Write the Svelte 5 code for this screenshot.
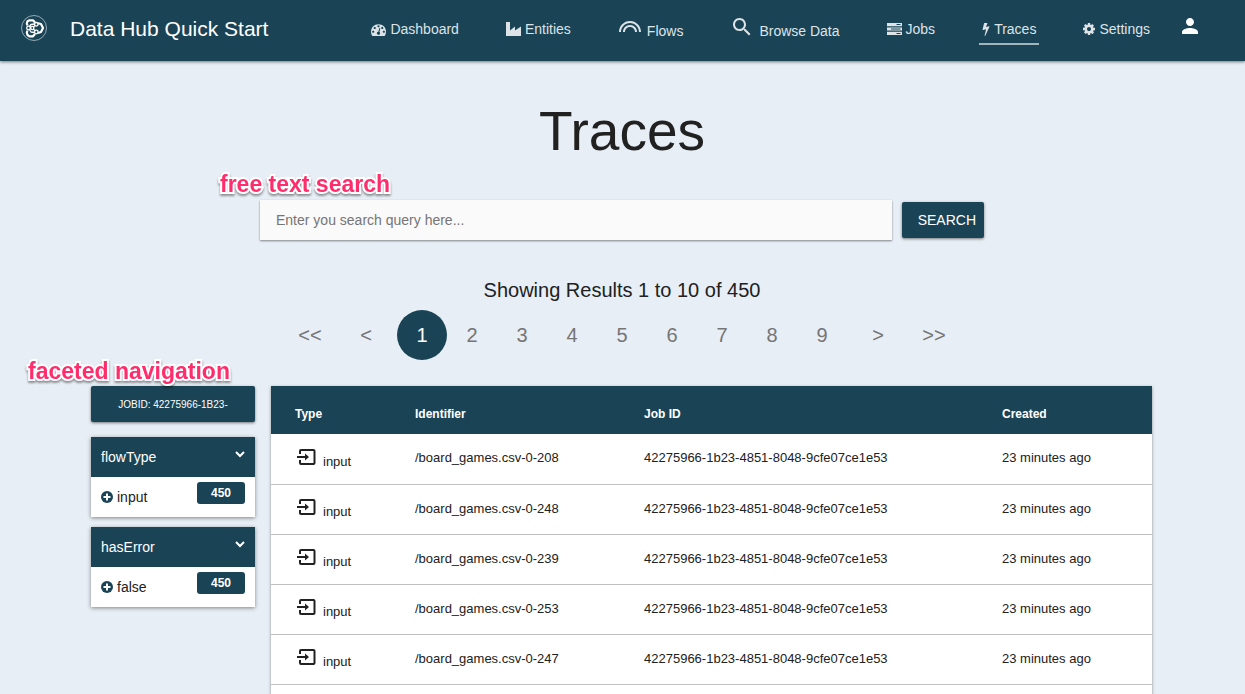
<script>
  const gauge = 'M384 1152q0-53-37.5-90.5t-90.5-37.5-90.5 37.5-37.5 90.5 37.5 90.5 90.5 37.5 90.5-37.5 37.5-90.5zm192-448q0-53-37.5-90.5t-90.5-37.5-90.5 37.5-37.5 90.5 37.5 90.5 90.5 37.5 90.5-37.5 37.5-90.5zm428 481l101-382q6-26-7.5-48.5t-38.5-29.5-48 6.5-30 39.5l-101 382q-60 5-107 43.5t-63 98.5q-20 77 20 146t117 89 146-20 89-117q16-60-6-117t-72-91zm660-33q0-53-37.5-90.5t-90.5-37.5-90.5 37.5-37.5 90.5 37.5 90.5 90.5 37.5 90.5-37.5 37.5-90.5zm-640-640q0-53-37.5-90.5t-90.5-37.5-90.5 37.5-37.5 90.5 37.5 90.5 90.5 37.5 90.5-37.5 37.5-90.5zm448 192q0-53-37.5-90.5t-90.5-37.5-90.5 37.5-37.5 90.5 37.5 90.5 90.5 37.5 90.5-37.5 37.5-90.5zm320 448q0 261-141 483-19 29-54 29h-1402q-35 0-54-29-141-221-141-483 0-182 71-348t191-286 286-191 348-71 348 71 286 191 191 286 71 348z';
  const cog = 'M1152 896q0-106-75-181t-181-75-181 75-75 181 75 181 181 75 181-75 75-181zm512-109v222q0 12-8 23t-20 13l-185 28q-19 54-39 91 35 50 107 138 10 12 10 25t-9 23q-27 37-99 108t-94 71q-12 0-26-9l-138-108q-44 23-91 38-16 136-29 186-7 28-36 28h-222q-14 0-24.5-8.5t-11.5-21.5l-28-184q-49-16-90-37l-141 107q-10 9-25 9-14 0-25-11-126-114-165-168-7-10-7-23 0-12 8-23 15-21 51-66.5t54-70.5q-27-50-41-99l-183-27q-13-2-21-12.5t-8-23.5v-222q0-12 8-23t19-13l186-28q14-46 39-92-40-57-107-138-10-12-10-24 0-10 9-23 26-36 98.5-107.5t94.5-71.5q13 0 26 10l138 107q44-23 91-38 16-136 29-186 7-28 36-28h222q14 0 24.5 8.5t11.5 21.5l28 184q49 16 90 37l142-107q9-9 24-9 13 0 25 10 129 119 165 170 7 8 7 22 0 12-8 23-15 21-51 66.5t-54 70.5q26 50 41 98l183 28q13 2 21 12.5t8 23.5z';
  const bolt = 'M1333 566q18 20 7 44l-540 1157q-13 25-42 25-4 0-14-2-17-5-25.5-19t-4.5-30l197-808-406 101q-4 1-12 1-18 0-31-11-18-15-13-39l201-825q4-14 16-23t28-9h328q19 0 32 12.5t13 29.5q0 8-5 18l-171 463 396-98q8-2 12-2 19 0 34 15z';
  const factory = 'M0 0h4v8.500l5-4v4l6-4v9.500h-15z';
  const servers = 'M0 0h15v3.200h-15zM9.500 1.100v1h4v-1zM0 4.400h15v3.200h-15zM4 5.500v1h9.500v-1zM0 8.800h15v3.200h-15zM9.500 9.900v1h4v-1z';
  const arcs = 'M12 10c-3.860 0-7 3.140-7 7h2c0-2.760 2.240-5 5-5s5 2.240 5 5h2c0-3.860-3.140-7-7-7zm0-4C5.930 6 1 10.930 1 17h2c0-4.960 4.040-9 9-9s9 4.040 9 9h2c0-6.070-4.930-11-11-11z';
  const magnifier = 'M15.500 14h-.790l-.280-.270C15.410 12.590 16 11.110 16 9.500 16 5.910 13.090 3 9.500 3S3 5.910 3 9.500 5.910 16 9.500 16c1.610 0 3.090-.590 4.230-1.570l.270.280v.790l5 4.990L20.490 19l-4.990-5zm-6 0C7.010 14 5 11.990 5 9.500S7.010 5 9.500 5 14 7.010 14 9.500 11.990 14 9.500 14z';

  const links = [
    { label: 'Dashboard', path: gauge, box: '0 128 1792 1536', w: 15, h: 13 },
    { label: 'Entities', path: factory, box: '0 0 15 14', w: 15, h: 14 },
    { label: 'Flows', path: arcs, box: '0 0 24 24', w: 24, h: 24, large: true },
    { label: 'Browse Data', path: magnifier, box: '0 0 24 24', w: 24, h: 24, large: true },
    { label: 'Jobs', path: servers, box: '0 0 15 12', w: 15, h: 12 },
    { label: 'Traces', path: bolt, box: '448 0 896 1792', w: 8, h: 14, active: true },
    { label: 'Settings', path: cog, box: '128 128 1536 1536', w: 12, h: 12 }
  ];

  const pages = [1, 2, 3, 4, 5, 6, 7, 8, 9];
  const facets = [
    { name: 'flowType', value: 'input', count: 450 },
    { name: 'hasError', value: 'false', count: 450 }
  ];
  const traces = [208, 248, 239, 253, 247].map((n) => ({
    type: 'input',
    identifier: `/board_games.csv-0-${n}`,
    job: '42275966-1b23-4851-8048-9cfe07ce1e53',
    created: '23 minutes ago'
  }));

  let query = $state('');
  let page = $state(1);
</script>

<div class="app">
  <header>
    <svg class="logo" viewBox="0 0 26 26" width="26" height="26" aria-hidden="true">
      <circle cx="13" cy="13" r="12.500" fill="none" stroke="#b4c2ca" stroke-width="0.800" />
      <g fill="none" stroke="#fff" stroke-linejoin="round">
        <path stroke-width="2.200" d="M6.500 10.500L5.800 8.500L6.500 6.200L8.500 5.300H12L14 7.500M17 8.300L20 9L22 13L20 17L17 18M14 19L12 21.300H8.500L6.500 20L5.800 17.500L6.500 15.500" />
        <g stroke-width="1.300">
          <circle cx="7.500" cy="13" r="1.800" />
          <circle cx="15.300" cy="9.300" r="1.800" />
          <circle cx="15.300" cy="17" r="1.800" />
          <circle cx="11.300" cy="13" r="1.600" />
          <path d="M12.500 12L14 10.500M12.500 14L14 15.800M8.500 11.500L10 9.500L13.500 9M8.500 14.500L10 17L13.500 17.500" />
        </g>
      </g>
    </svg>
    <span class="brand">Data Hub Quick Start</span>
    <nav aria-label="Main">
      {#each links as link}
        <a href="#{link.label}" class:active={link.active} class:large={link.large}>
          <svg viewBox={link.box} width={link.w} height={link.h} aria-hidden="true"><path d={link.path} fill="currentColor" fill-rule="evenodd" /></svg>
          <span>{link.label}</span>
        </a>
      {/each}
    </nav>
    <button class="user" aria-label="Account">
      <svg viewBox="0 0 24 24" width="24" height="24" aria-hidden="true"><path fill="#fff" d="M12 12c2.210 0 4-1.790 4-4s-1.790-4-4-4-4 1.790-4 4 1.790 4 4 4zm0 2c-2.670 0-8 1.340-8 4v2h16v-2c0-2.660-5.330-4-8-4z" /></svg>
    </button>
  </header>

  <main>
    <h1>Traces</h1>

    <form class="search" onsubmit={(e) => e.preventDefault()}>
      <span class="callout search-note">free text search</span>
      <input type="text" aria-label="Search query" placeholder="Enter you search query here..." bind:value={query} />
      <button class="go">SEARCH</button>
    </form>

    <p class="summary">Showing Results 1 to 10 of 450</p>
    <div class="pager">
      <button class="step">&lt;&lt;</button>
      <button class="step">&lt;</button>
      <div class="numbers">
        {#each pages as n}
          <button class:current={n === page} onclick={() => (page = n)}>{n}</button>
        {/each}
      </div>
      <button class="step">&gt;</button>
      <button class="step">&gt;&gt;</button>
    </div>

    <div class="content">
      <aside>
        <span class="callout facet-note">faceted navigation</span>
        <button class="chip">JOBID: 42275966-1B23-</button>
        {#each facets as facet}
          <section>
            <h2>
              {facet.name}
              <svg viewBox="0 0 10 7" width="10" height="7" aria-hidden="true"><path d="M1 1L5 5L9 1" fill="none" stroke="#fff" stroke-width="2" /></svg>
            </h2>
            <div class="facet">
              <svg viewBox="0 0 12 12" width="12" height="12" aria-hidden="true"><circle cx="6" cy="6" r="6" fill="#1a4456" /><path d="M6 2.500V9.500M2.500 6H9.500" stroke="#fff" stroke-width="2" /></svg>
              <span>{facet.value}</span>
              <b>{facet.count}</b>
            </div>
          </section>
        {/each}
      </aside>

      <table>
        <thead>
          <tr><th class="type">Type</th><th class="ident">Identifier</th><th class="job">Job ID</th><th>Created</th></tr>
        </thead>
        <tbody>
          {#each traces as t}
            <tr>
              <td>
                <div class="kind">
                  <svg viewBox="0 0 20 18" width="20" height="18" aria-hidden="true">
                    <path d="M3 6V3Q3 2 4 2H16.500Q17.500 2 17.500 3V15Q17.500 16 16.500 16H4Q3 16 3 15V12" fill="none" stroke="#212121" stroke-width="2" />
                    <path d="M0 8H8V5.500L12 9L8 12.500V10H0Z" fill="#212121" />
                  </svg>
                  <span>{t.type}</span>
                </div>
              </td>
              <td>{t.identifier}</td>
              <td>{t.job}</td>
              <td>{t.created}</td>
            </tr>
          {/each}
        </tbody>
        <tfoot>
          <tr><td colspan="4"></td></tr>
        </tfoot>
      </table>
    </div>
  </main>
</div>

<style>
  :global(body) {
    margin: 0;
    background: #e7eef5;
  }
  .app {
    height: 100vh;
    overflow: hidden;
    font-family: "Liberation Sans", Arial, sans-serif;
    font-size: 14px;
    color: #212121;
  }
  * {
    box-sizing: border-box;
  }
  svg {
    display: block;
    flex: none;
  }
  button {
    font: inherit;
    border: 0;
    padding: 0;
    background: none;
    cursor: pointer;
  }
  header {
    position: relative;
    display: flex;
    align-items: flex-start;
    height: 61px;
    padding: 15px 43px 0 21px;
    background: #1a4456;
    box-shadow: 0 1px 3px rgba(0, 0, 0, 0.5);
  }
  .brand {
    margin-left: 23px;
    font-size: 21px;
    line-height: 28px;
    color: #fff;
    white-space: nowrap;
  }
  nav {
    display: flex;
    gap: 41px;
    margin-left: auto;
  }
  nav a {
    display: flex;
    align-items: center;
    gap: 4px;
    height: 30px;
    padding: 0 3px;
    border-bottom: 2px solid transparent;
    color: #dde3e7;
    font-size: 14px;
    line-height: 16px;
    text-decoration: none;
    white-space: nowrap;
  }
  nav a.active {
    border-color: #a3b4bc;
  }
  nav a.large {
    align-items: flex-end;
    gap: 5px;
    padding: 0 3px 4px;
  }
  .user {
    margin: -1px 0 0 25px;
  }
  main {
    padding-right: 1px;
  }
  h1 {
    margin: 38px 0 0;
    font-size: 55px;
    font-weight: 400;
    line-height: 64px;
    text-align: center;
  }
  .search {
    position: relative;
    display: flex;
    align-items: center;
    gap: 10px;
    max-width: 724px;
    margin: 37px auto 0;
  }
  .search input {
    flex: 1;
    height: 40px;
    padding: 0 16px;
    border: 0;
    background: #fafafa;
    box-shadow: 0 1px 2px rgba(0, 0, 0, 0.45);
    font: inherit;
    color: #212121;
  }
  .search input::placeholder {
    color: #757575;
    opacity: 1;
  }
  .go,
  .chip {
    height: 36px;
    border-radius: 2px;
    background: #1a4456;
    box-shadow: 0 1px 3px rgba(0, 0, 0, 0.5);
    color: #fff;
  }
  .go {
    padding: 0 8px 0 16px;
  }
  .callout {
    position: absolute;
    z-index: 1;
    color: #ff2d6c;
    font-size: 23px;
    font-weight: 700;
    line-height: 28px;
    white-space: nowrap;
    -webkit-text-stroke: 4px #fff;
    paint-order: stroke fill;
    filter: drop-shadow(0 2px 1px rgba(0, 0, 0, 0.4));
  }
  .search-note {
    left: -40px;
    top: -30px;
  }
  .facet-note {
    left: -63px;
    top: -29px;
  }
  .summary {
    margin: 36px 0 0;
    font-size: 20px;
    line-height: 28px;
    text-align: center;
  }
  .pager {
    display: flex;
    justify-content: center;
    margin-top: 6px;
    font-size: 20px;
  }
  .pager button {
    height: 50px;
    color: #757575;
  }
  .pager .step {
    width: 56px;
  }
  .numbers {
    display: flex;
    margin: 0 3px;
  }
  .numbers button {
    width: 50px;
    border-radius: 50%;
  }
  .pager .current {
    background: #1a4456;
    color: #fff;
  }
  .content {
    display: flex;
    align-items: flex-start;
    gap: 16px;
    margin-top: 26px;
    padding: 0 92px 0 91px;
  }
  aside {
    position: relative;
    flex: none;
    width: 164px;
  }
  .chip {
    width: 100%;
    margin-bottom: 15px;
    font-size: 10px;
  }
  section {
    margin-bottom: 10px;
    background: #fff;
    box-shadow: 0 1px 4px rgba(0, 0, 0, 0.45);
  }
  h2 {
    display: flex;
    align-items: center;
    justify-content: space-between;
    height: 40px;
    margin: 0;
    padding: 0 10px;
    background: #1a4456;
    color: #fff;
    font-size: 14px;
    font-weight: 400;
  }
  h2 svg {
    margin-bottom: 5px;
  }
  .facet {
    display: flex;
    align-items: center;
    gap: 4px;
    height: 40px;
    padding: 0 10px;
  }
  .facet b {
    width: 48px;
    margin: 0 0 8px auto;
    border-radius: 3px;
    background: #1a4456;
    color: #fff;
    font-size: 12px;
    line-height: 22px;
    text-align: center;
  }
  table {
    flex: 1;
    border-collapse: collapse;
    table-layout: fixed;
    background: #fff;
    box-shadow: 0 1px 3px rgba(0, 0, 0, 0.4);
    font-size: 13px;
  }
  th {
    height: 48px;
    padding: 7px 0 0 24px;
    background: #1a4456;
    color: #fff;
    font-size: 12px;
    text-align: left;
  }
  .type {
    width: 120px;
  }
  .ident {
    width: 229px;
  }
  .job {
    width: 358px;
  }
  td {
    height: 50px;
    padding: 0 0 2px 24px;
    border-bottom: 1px solid #c0c0c0;
  }
  .kind {
    display: flex;
    align-items: flex-end;
    gap: 6px;
    padding: 0 0 2px 2px;
  }
  .kind span {
    line-height: 15px;
    margin-bottom: -3px;
  }
</style>
